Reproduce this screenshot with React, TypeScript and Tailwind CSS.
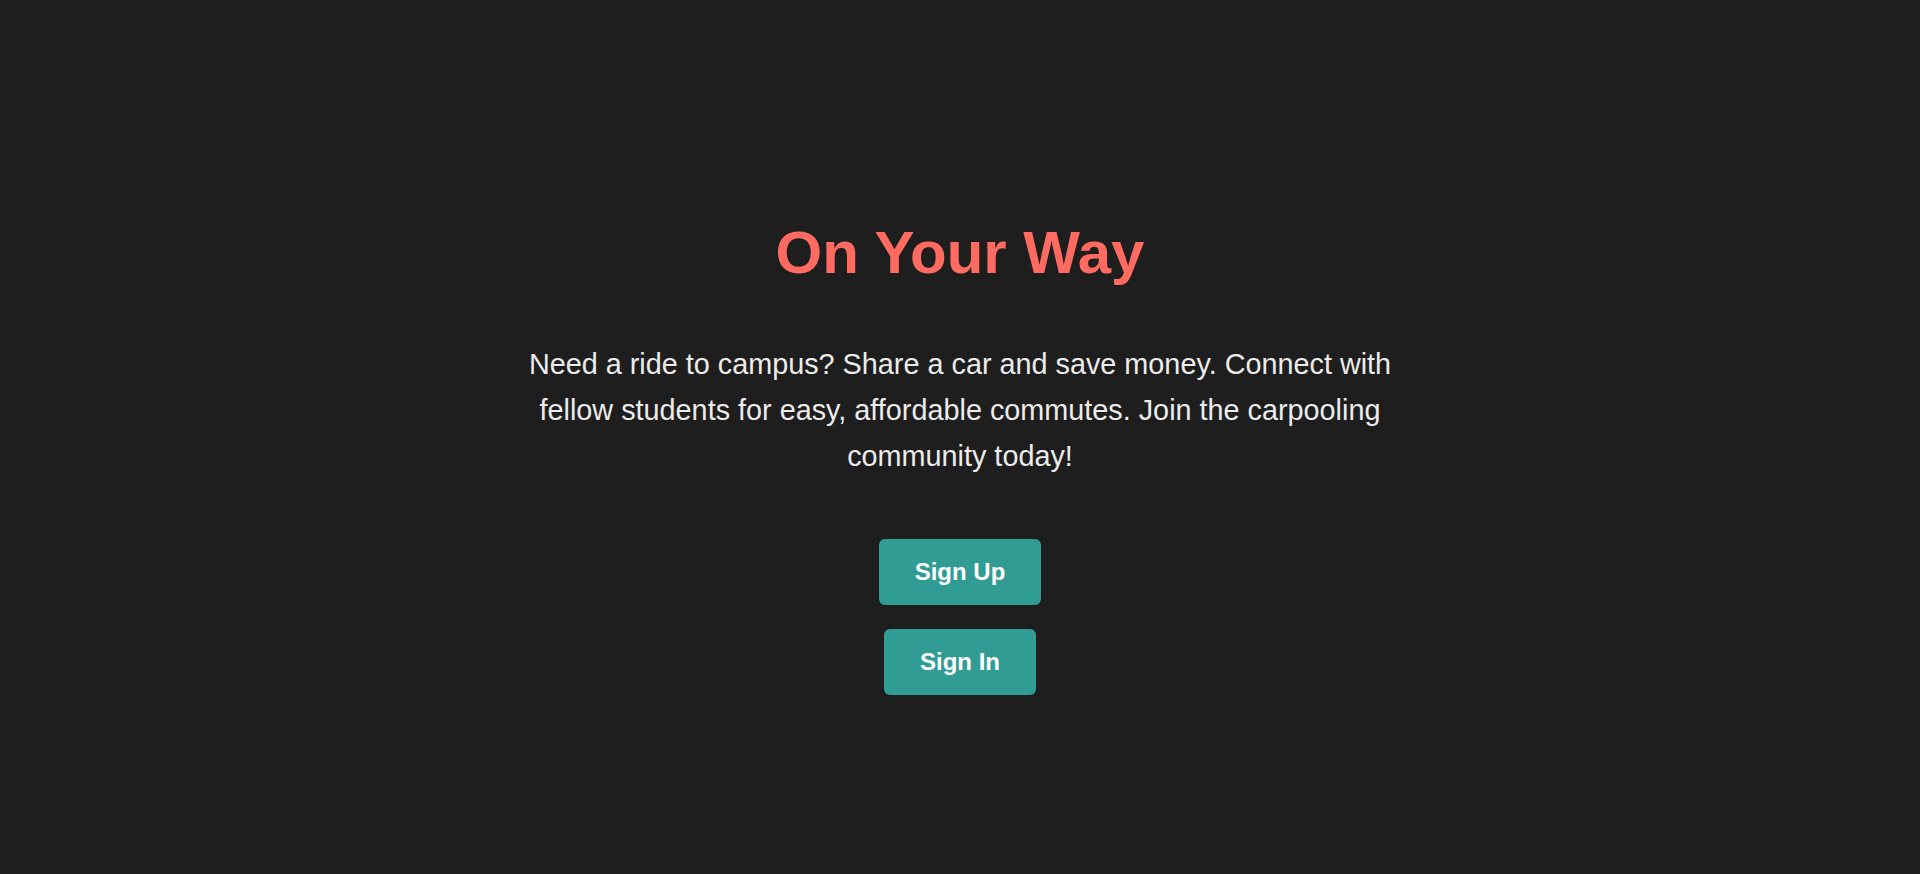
export default function App() {
  return (
    <div className="min-h-[874px] bg-[#1e1e1e] flex flex-col items-center pt-[220px] text-center font-['Liberation_Sans',Arial,sans-serif]">
      <h1 className="text-[60px] leading-[66px] font-bold text-[#ff6b61]">On Your Way</h1>
      <p className="mt-[55px] max-w-[900px] text-[28.8px] leading-[46px] text-[#ececec]">
        Need a ride to campus? Share a car and save money. Connect with fellow students for easy,
        affordable commutes. Join the carpooling community today!
      </p>
      <div className="mt-[60px] flex flex-col items-center gap-6">
        <button className="px-9 py-[19px] text-2xl leading-[28px] font-bold text-white bg-[#309c94] rounded-md">
          Sign Up
        </button>
        <button className="px-9 py-[19px] text-2xl leading-[28px] font-bold text-white bg-[#309c94] rounded-md">
          Sign In
        </button>
      </div>
    </div>
  );
}
